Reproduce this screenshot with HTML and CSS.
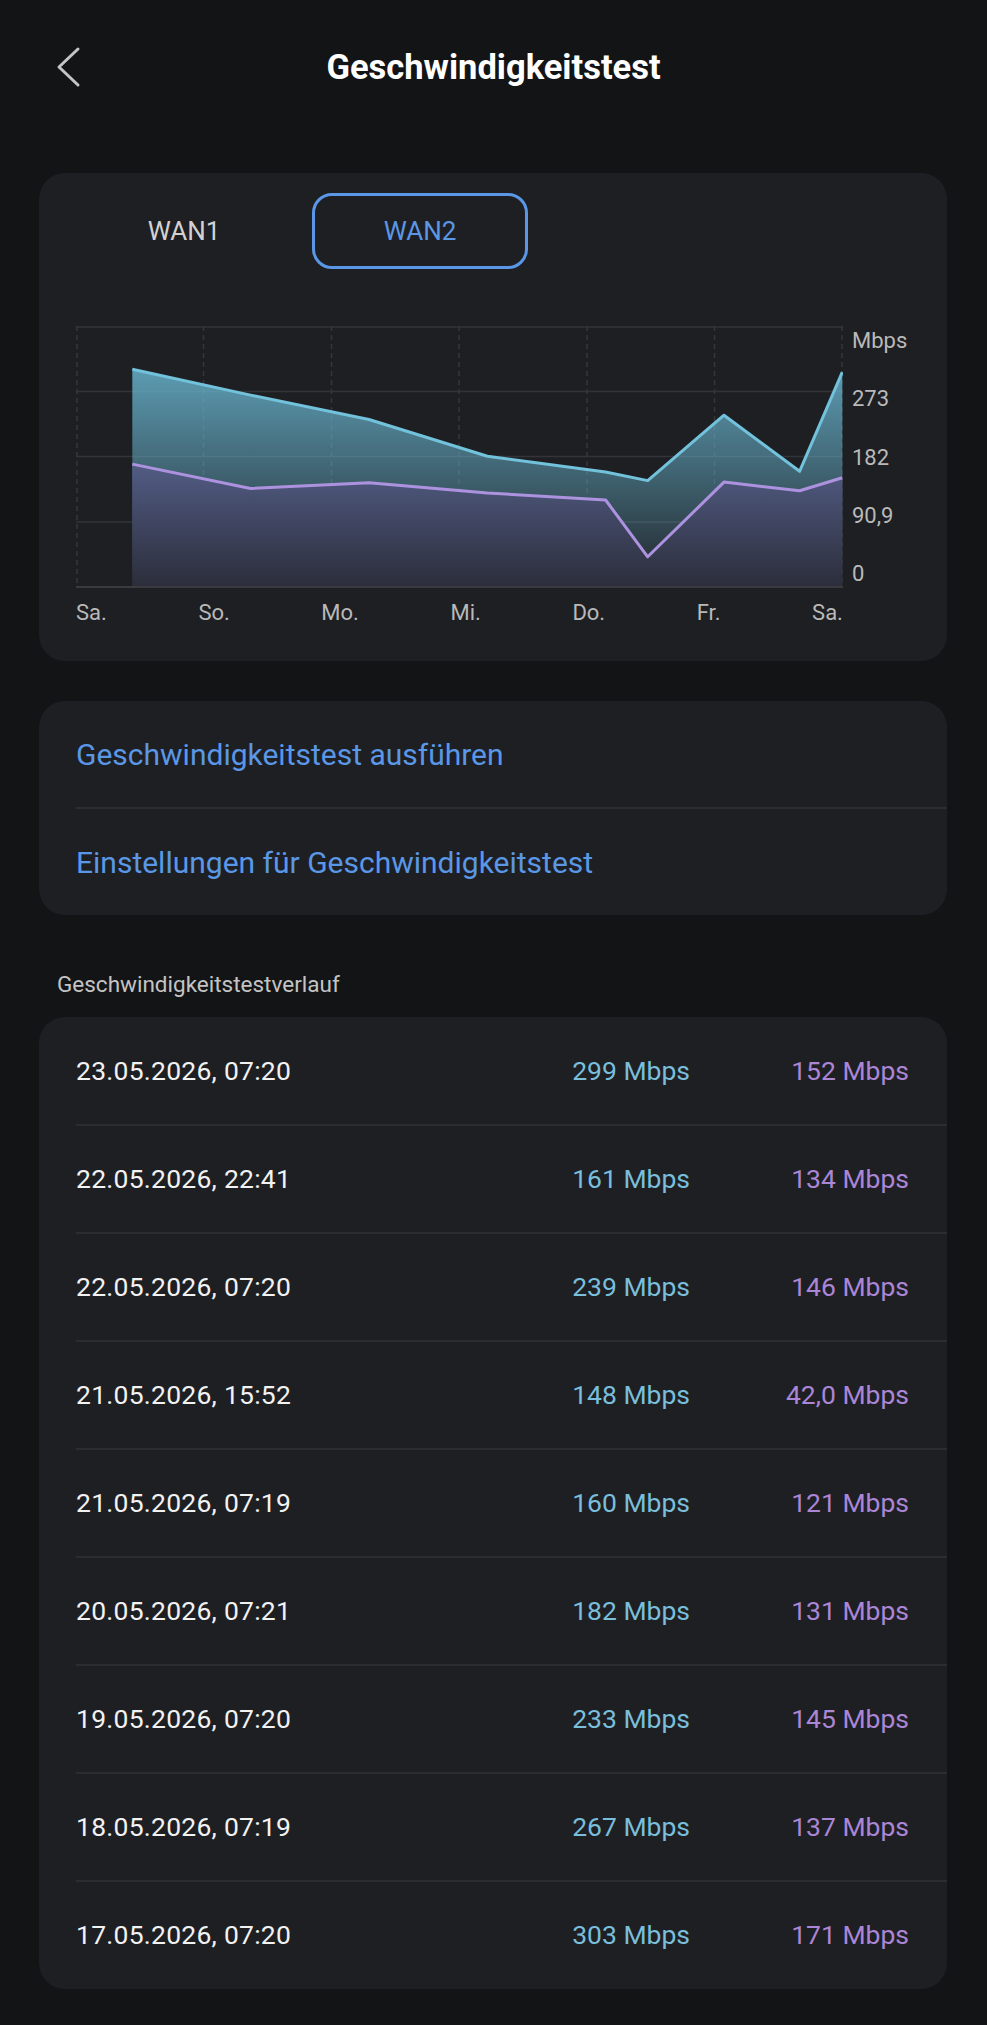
FILE: index.html
```html
<!DOCTYPE html>
<html lang="de">
<head>
<meta charset="utf-8">
<title>Geschwindigkeitstest</title>
<link rel="stylesheet" href="styles.css">
</head>
<body>

<div class="topbar">
  <a class="back" href="#" aria-label="Zurück">
    <svg width="26" height="42" viewBox="0 0 26 42"><polyline points="22,3 3,21 22,39" fill="none" stroke="#c4c4c4" stroke-width="3" stroke-linecap="round" stroke-linejoin="round"/></svg>
  </a>
  <h1 class="title">Geschwindigkeitstest</h1>
  <span></span>
</div>

<main class="page">

  <section class="card chart-card">
    <div class="tabs">
      <button class="tab">WAN1</button>
      <button class="tab active">WAN2</button>
    </div>

    <div class="chart">
      <svg class="plot" width="767" height="262" viewBox="0 0 767 262">
        <defs>
          <linearGradient id="dlFill" gradientUnits="userSpaceOnUse" x1="0" y1="40" x2="0" y2="262">
            <stop offset="0" stop-color="#67b2cc" stop-opacity="0.86"/>
            <stop offset="1" stop-color="#67b2cc" stop-opacity="0.04"/>
          </linearGradient>
          <linearGradient id="ulFill" gradientUnits="userSpaceOnUse" x1="0" y1="135" x2="0" y2="262">
            <stop offset="0" stop-color="#535d86"/>
            <stop offset="1" stop-color="#2b2d3a"/>
          </linearGradient>
        </defs>

        <!-- grid -->
        <g stroke="#333439" stroke-width="1.5">
          <line x1="0" y1="1" x2="767" y2="1"/>
          <line x1="0" y1="65.5" x2="767" y2="65.5"/>
          <line x1="0" y1="130.5" x2="767" y2="130.5"/>
          <line x1="0" y1="196" x2="767" y2="196"/>
        </g>
        <g stroke="#36373c" stroke-width="1.5" stroke-dasharray="5 4">
          <line x1="1" y1="0" x2="1" y2="261"/>
          <line x1="127.5" y1="0" x2="127.5" y2="261"/>
          <line x1="255.5" y1="0" x2="255.5" y2="261"/>
          <line x1="383" y1="0" x2="383" y2="261"/>
          <line x1="511" y1="0" x2="511" y2="261"/>
          <line x1="638.5" y1="0" x2="638.5" y2="261"/>
          <line x1="766" y1="0" x2="766" y2="261"/>
        </g>

        <!-- download -->
        <polygon fill="url(#dlFill)" points="56.3,261 56.3,43.2 174.6,69.1 293,93.5 411.4,130.2 529.6,146 571.7,154.6 648,89.2 723.6,145.3 766.3,46.1 766.3,261"/>
        <!-- upload -->
        <polygon fill="url(#ulFill)" points="56.3,261 56.3,138.1 174.6,162.5 293,156.8 411.4,166.9 529.6,174 571.7,230.8 648,156.1 723.6,164.7 766.3,151.8 766.3,261"/>

        <line x1="0" y1="261" x2="767" y2="261" stroke="#3a3b40" stroke-width="2"/>

        <polyline fill="none" stroke="#72c2dc" stroke-width="3" stroke-linejoin="round" points="56.3,43.2 174.6,69.1 293,93.5 411.4,130.2 529.6,146 571.7,154.6 648,89.2 723.6,145.3 766.3,46.1"/>
        <polyline fill="none" stroke="#ad92e0" stroke-width="3" stroke-linejoin="round" points="56.3,138.1 174.6,162.5 293,156.8 411.4,166.9 529.6,174 571.7,230.8 648,156.1 723.6,164.7 766.3,151.8"/>
      </svg>

      <div class="y-axis">
        <span>Mbps</span>
        <span>273</span>
        <span>182</span>
        <span>90,9</span>
        <span>0</span>
      </div>

      <div class="x-axis">
        <span>Sa.</span>
        <span>So.</span>
        <span>Mo.</span>
        <span>Mi.</span>
        <span>Do.</span>
        <span>Fr.</span>
        <span>Sa.</span>
      </div>
    </div>
  </section>

  <section class="card actions">
    <a class="action" href="#">Geschwindigkeitstest ausführen</a>
    <a class="action" href="#">Einstellungen für Geschwindigkeitstest</a>
  </section>

  <h2 class="section-title">Geschwindigkeitstestverlauf</h2>

  <section class="card history">
    <div class="row"><span class="date">23.05.2026, 07:20</span><span class="dl">299 Mbps</span><span class="ul">152 Mbps</span></div>
    <div class="row"><span class="date">22.05.2026, 22:41</span><span class="dl">161 Mbps</span><span class="ul">134 Mbps</span></div>
    <div class="row"><span class="date">22.05.2026, 07:20</span><span class="dl">239 Mbps</span><span class="ul">146 Mbps</span></div>
    <div class="row"><span class="date">21.05.2026, 15:52</span><span class="dl">148 Mbps</span><span class="ul">42,0 Mbps</span></div>
    <div class="row"><span class="date">21.05.2026, 07:19</span><span class="dl">160 Mbps</span><span class="ul">121 Mbps</span></div>
    <div class="row"><span class="date">20.05.2026, 07:21</span><span class="dl">182 Mbps</span><span class="ul">131 Mbps</span></div>
    <div class="row"><span class="date">19.05.2026, 07:20</span><span class="dl">233 Mbps</span><span class="ul">145 Mbps</span></div>
    <div class="row"><span class="date">18.05.2026, 07:19</span><span class="dl">267 Mbps</span><span class="ul">137 Mbps</span></div>
    <div class="row"><span class="date">17.05.2026, 07:20</span><span class="dl">303 Mbps</span><span class="ul">171 Mbps</span></div>
  </section>

</main>

</body>
</html>
```

FILE: styles.css
```css
body {
    margin: 0;
    background: #131416;
    color: #f0f0f0;
    font-family: Roboto, "Noto Sans", sans-serif;
}

/* top bar */
.topbar {
    display: grid;
    grid-template-columns: 1fr auto 1fr;
    align-items: center;
    height: 134px;
}
.back {
    display: flex;
    padding-left: 56px;
}
.title {
    margin: 0;
    font-size: 34.5px;
    font-weight: 700;
    color: #ffffff;
}

.page {
    padding: 39px 40px 36px 39px;
}

.card {
    background: #1e1f23;
    border-radius: 26px;
}

/* chart card */
.chart-card {
    padding: 20px 0 35px 37px;
}
.tabs {
    display: flex;
    gap: 20px;
}
.tab {
    width: 216px;
    height: 76px;
    border: 3px solid transparent;
    border-radius: 20px;
    background: none;
    color: #d2d2d2;
    font-family: Roboto, sans-serif;
    font-size: 26px;
}
.tab.active {
    border-color: #5a97e6;
    color: #5a97e6;
}

.chart {
    display: grid;
    grid-template-columns: 767px 1fr;
    column-gap: 9px;
    margin-top: 57px;
}
.plot {
    display: block;
}
.y-axis {
    display: flex;
    flex-direction: column;
    justify-content: space-between;
    padding: 2px 0 1px;
    font-size: 22px;
    line-height: 26px;
    color: #b9b9b9;
}
.x-axis {
    display: flex;
    justify-content: space-between;
    margin-top: 12px;
    font-size: 22px;
    line-height: 26px;
    color: #b9b9b9;
}

/* actions */
.actions {
    margin-top: 40px;
}
.action {
    display: flex;
    align-items: center;
    height: 106px;
    margin-left: 37px;
    color: #5a97e6;
    font-size: 30px;
    text-decoration: none;
}
.action + .action {
    border-top: 2px solid #2c2d31;
}

.section-title {
    margin: 56px 0 20px 18px;
    font-size: 22.5px;
    font-weight: 400;
    line-height: 26px;
    color: #c4c4c4;
}

/* history */
.history {
    padding: 1px 0;
}
.row {
    display: grid;
    grid-template-columns: 1fr 160px 219px;
    align-items: center;
    height: 106px;
    margin-left: 37px;
    padding-right: 38px;
    font-size: 26.5px;
    line-height: 32px;
}
.row + .row {
    border-top: 2px solid #2c2d31;
}
.date {
    color: #f2f2f2;
    letter-spacing: 0.25px;
}
.dl {
    text-align: right;
    color: #79bedb;
}
.ul {
    text-align: right;
    color: #ab86d6;
}
```
